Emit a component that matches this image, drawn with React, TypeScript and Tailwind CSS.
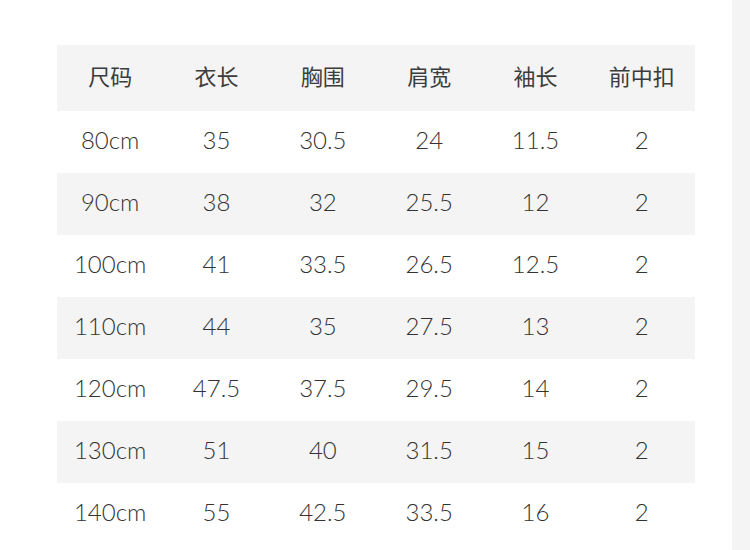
import React from 'react';

const headers = ['尺码', '衣长', '胸围', '肩宽', '袖长', '前中扣'];

const rows: string[][] = [
  ['80cm', '35', '30.5', '24', '11.5', '2'],
  ['90cm', '38', '32', '25.5', '12', '2'],
  ['100cm', '41', '33.5', '26.5', '12.5', '2'],
  ['110cm', '44', '35', '27.5', '13', '2'],
  ['120cm', '47.5', '37.5', '29.5', '14', '2'],
  ['130cm', '51', '40', '31.5', '15', '2'],
  ['140cm', '55', '42.5', '33.5', '16', '2'],
];

export default function App() {
  return (
    <div
      className="w-[750px] h-[550px] flex overflow-hidden bg-white text-[#333333] font-light"
      style={{ fontFamily: '"Lato", "Noto Sans CJK SC", sans-serif' }}
    >
      <div className="flex-1 pl-[57px] pt-[45px]">
        <div className="w-[638px]">
          <div className="grid grid-cols-6 h-[66px] items-center bg-[#f4f4f4] text-[22px] leading-none font-normal text-[#3c3c3c]">
            {headers.map((h) => (
              <div key={h} className="text-center -mt-[2px]">{h}</div>
            ))}
          </div>
          {rows.map((r, i) => (
            <div
              key={r[0]}
              className={`grid grid-cols-6 h-[62px] items-center text-[24px] leading-none ${i % 2 === 1 ? 'bg-[#f4f4f4]' : 'bg-white'}`}
            >
              {r.map((c, j) => (
                <div key={j} className="text-center -mt-[5px]">{c}</div>
              ))}
            </div>
          ))}
        </div>
      </div>
      <div className="w-[18px] bg-[#f4f4f4]" />
    </div>
  );
}
